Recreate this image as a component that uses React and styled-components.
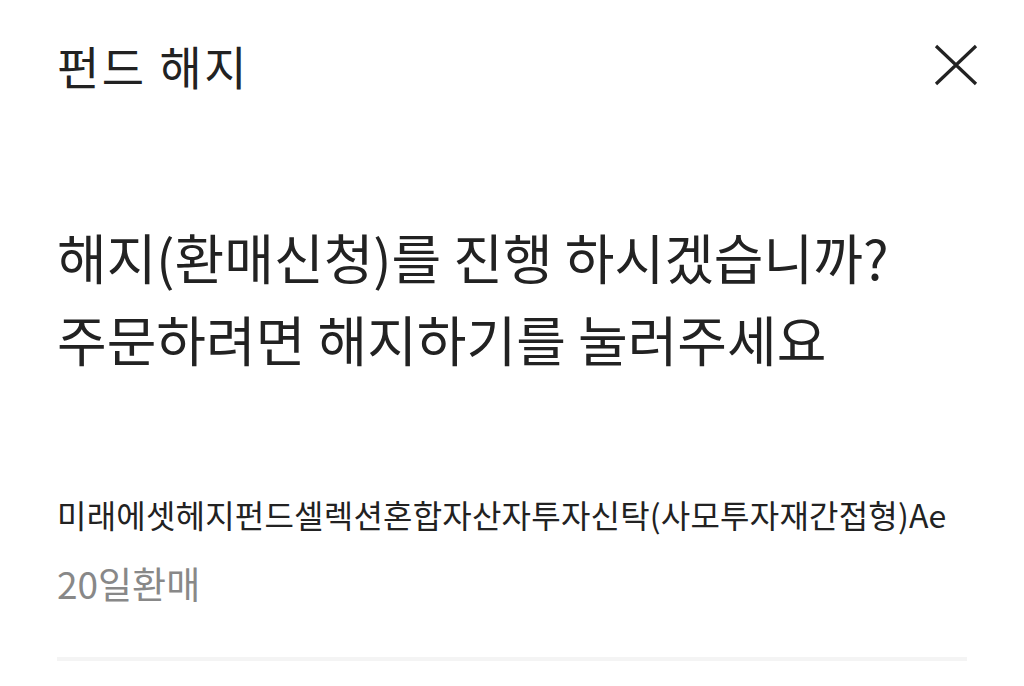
import React from "react";
import styled, { createGlobalStyle } from "styled-components";

const GlobalStyle = createGlobalStyle`
  html, body {
    margin: 0;
    padding: 0;
    background: #ffffff;
  }
  body {
    font-family: "Noto Sans CJK KR", "Noto Sans", sans-serif;
    color: #222222;
  }
`;

export default function App() {
  return (
    <>
      <GlobalStyle />
      <Sheet>
        <Header>
          <Title>펀드 해지</Title>
          <CloseButton aria-label="닫기">
            <svg width="44" height="44" viewBox="0 0 44 44" fill="none">
              <path d="M2 3 L42 41 M42 3 L2 41" stroke="#222" strokeWidth="3.2" />
            </svg>
          </CloseButton>
        </Header>
        <Question>
          해지(환매신청)를 진행 하시겠습니까?
          <br />
          주문하려면 해지하기를 눌러주세요
        </Question>
        <FundInfo>
          <FundName>미래에셋헤지펀드셀렉션혼합자산자투자신탁(사모투자재간접형)Ae</FundName>
          <FundMeta>20일환매</FundMeta>
        </FundInfo>
        <Divider />
      </Sheet>
    </>
  );
}

const Sheet = styled.div`
  display: flex;
  flex-direction: column;
  padding: 0 57px;
  height: 686px;
  box-sizing: border-box;
  overflow: hidden;
`;

const Header = styled.div`
  display: flex;
  align-items: center;
  justify-content: space-between;
  height: 130px;
`;

const Title = styled.h1`
  margin: 0;
  font-size: 46px;
  font-weight: 400;
  letter-spacing: 2.5px;
  color: #222222;
`;

const CloseButton = styled.button`
  display: flex;
  align-items: center;
  justify-content: center;
  background: none;
  border: none;
  padding: 0;
  margin-right: -11px;
  cursor: pointer;
`;

const Question = styled.p`
  margin: 86px 0 0;
  font-size: 54px;
  line-height: 82px;
  font-weight: 400;
  color: #222222;
`;

const FundInfo = styled.div`
  display: flex;
  flex-direction: column;
  margin-top: 112px;
`;

const FundName = styled.div`
  font-size: 32px;
  line-height: 44px;
  letter-spacing: 0.2px;
  color: #222222;
  white-space: nowrap;
`;

const FundMeta = styled.div`
  margin-top: 25px;
  font-size: 37px;
  line-height: 44px;
  color: #888888;
`;

const Divider = styled.div`
  margin-top: 52px;
  height: 4px;
  background: #f4f4f4;
`;
